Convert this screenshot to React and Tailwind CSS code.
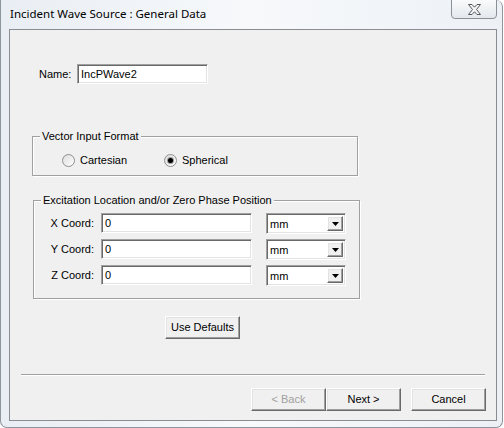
import React from 'react'

const sunken =
  'border border-t-[#a0a0a0] border-l-[#a0a0a0] border-r-white border-b-white shadow-[inset_1px_1px_0_#696969,inset_-1px_-1px_0_#e3e3e3] bg-white'
const raised =
  'border border-t-white border-l-white border-r-[#696969] border-b-[#696969] shadow-[inset_-1px_-1px_0_#a0a0a0,inset_1px_1px_0_#e3e3e3] bg-[#f0f0f0]'

function Radio({ label, checked, width }) {
  return (
    <div className="flex items-center gap-[5px]" style={width ? { width } : undefined}>
      <span className="w-[13px] h-[13px] rounded-full border border-[#8e8f8f] bg-gradient-to-br from-[#dcdcdc] to-white flex items-center justify-center">
        {checked && <span className="w-[5px] h-[5px] rounded-full bg-black shadow-[0_0_0_1px_#9a9a9a]" />}
      </span>
      <span>{label}</span>
    </div>
  )
}

function GroupBox({ title, className, children }) {
  return (
    <div className={`relative border border-[#a0a0a0] shadow-[1px_1px_0_white,inset_1px_1px_0_white] ${className}`}>
      <span className="absolute left-[7px] top-[-8px] px-[2px] bg-[#f0f0f0] leading-[14px]">{title}</span>
      {children}
    </div>
  )
}

function UnitSelect() {
  return (
    <div className={`${sunken} w-[80px] h-[21px] flex items-end justify-between pl-[3px] pr-[2px] pb-[2px]`}>
      <span className="leading-[14px]">mm</span>
      <span className={`${raised} w-[16px] h-[15px] flex items-center justify-center`}>
        <svg width="7" height="4" viewBox="0 0 7 4">
          <polygon points="0,0 7,0 3.5,4" fill="#000" />
        </svg>
      </span>
    </div>
  )
}

function CoordRow({ label }) {
  return (
    <div className="flex items-start h-[21px]">
      <span className="w-[60px] text-right leading-[20px]">{label}</span>
      <div className={`${sunken} ml-[7px] w-[151px] h-[20px] flex items-center pl-[3px]`}>0</div>
      <div className="ml-[14px]">
        <UnitSelect />
      </div>
    </div>
  )
}

function PushButton({ children, disabled, className = '' }) {
  return (
    <button
      className={`${raised} w-[75px] h-[23px] flex items-center justify-center ${disabled ? 'text-[#a0a0a0]' : 'text-black'} ${className}`}
    >
      {children}
    </button>
  )
}

export default function App() {
  return (
    <div className="w-[504px] h-[428px] bg-white font-['Liberation_Sans',Arial,sans-serif] text-[11px] text-black">
      <div className="w-[503px] h-[428px] flex flex-col border-x border-b border-[#8d959e] rounded-b-[7px] rounded-tr-[7px] bg-gradient-to-r from-[#e9eef4] via-[#f7f9fb] to-[#edf1f6] pl-[8px] pr-[5px] pb-[6px]">
        <div className="h-[29px] flex items-start shrink-0">
          <span className="mt-[6px] ml-[1px] font-['Noto_Sans',sans-serif] text-[11.5px] leading-[16px] text-black">
            Incident Wave Source : General Data
          </span>
          <div className="ml-auto -mt-[1px] w-[46px] h-[20px] rounded-b-[4px] border border-[#8a9097] bg-gradient-to-b from-[#f9fafb] to-[#e4e8ed] flex items-center justify-center">
            <svg width="13" height="11" viewBox="0 0 13 11">
              <polygon
                points="0.5,0.5 4,0.5 6.5,3.2 9,0.5 12.5,0.5 8.5,5.5 12.5,10.5 9,10.5 6.5,7.8 4,10.5 0.5,10.5 4.5,5.5"
                fill="#f4f4f4"
                stroke="#55595e"
                strokeWidth="1"
                strokeLinejoin="round"
              />
            </svg>
          </div>
        </div>

        <div className="flex-1 border border-[#898c90] bg-[#f0f0f0] flex flex-col">
          <div className="mt-[34px] flex items-center pl-[29px]">
            <span className="w-[38px]">Name:</span>
            <div className={`${sunken} w-[131px] h-[20px] flex items-center pl-[3px]`}>IncPWave2</div>
          </div>

          <GroupBox title="Vector Input Format" className="mt-[52px] ml-[22px] w-[326px] h-[40px]">
            <div className="flex items-center pt-[15px] pl-[29px]">
              <Radio label="Cartesian" width="102px" />
              <Radio label="Spherical" checked />
            </div>
          </GroupBox>

          <GroupBox title="Excitation Location and/or Zero Phase Position" className="mt-[24px] ml-[23px] w-[327px] h-[99px]">
            <div className="flex flex-col gap-[5px] pt-[12px]">
              <CoordRow label="X Coord:" />
              <CoordRow label="Y Coord:" />
              <CoordRow label="Z Coord:" />
            </div>
          </GroupBox>

          <PushButton className="mt-[17px] ml-[155px] h-[22px]">Use Defaults</PushButton>

          <div className="mt-[35px] ml-[11px] w-[464px] border-t border-t-[#a0a0a0] border-b border-b-white" />

          <div className="mt-[12px] flex ml-[241px]">
            <PushButton disabled>&lt; Back</PushButton>
            <PushButton>Next &gt;</PushButton>
            <PushButton className="ml-[10px]">Cancel</PushButton>
          </div>
        </div>
      </div>
    </div>
  )
}
